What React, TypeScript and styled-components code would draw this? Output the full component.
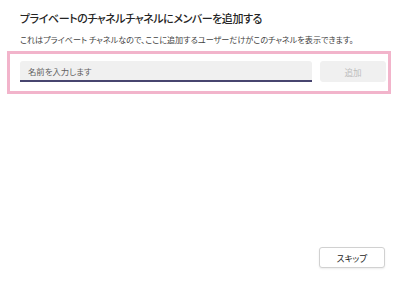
import styled, { createGlobalStyle } from 'styled-components';

const GlobalStyle = createGlobalStyle`
  html, body {
    margin: 0;
    padding: 0;
    background: #ffffff;
  }
  body {
    font-family: "Noto Sans CJK JP", "Noto Sans", sans-serif;
    font-feature-settings: "palt";
  }
`;

const Dialog = styled.div`
  display: flex;
  flex-direction: column;
  width: 400px;
  height: 281px;
  box-sizing: border-box;
  padding: 10px 0 13px;
`;

const Header = styled.div`
  padding: 0 20px;
`;

const Title = styled.h1`
  margin: 0;
  font-size: 11px;
  font-weight: 500;
  letter-spacing: -0.45px;
  line-height: 16px;
  color: #242424;
  white-space: nowrap;
`;

const Subtitle = styled.p`
  margin: 8px 0 0;
  font-size: 8.1px;
  line-height: 12px;
  color: #424242;
  white-space: nowrap;
`;

const Highlight = styled.div`
  display: flex;
  align-items: center;
  gap: 8px;
  margin: 5px 9px 0 7px;
  padding: 7px 2px 9px 10px;
  border: 3px solid #f2b4cb;
`;

const NameInput = styled.input`
  flex: 1;
  height: 21px;
  box-sizing: border-box;
  padding: 0 8px;
  border: none;
  border-bottom: 2px solid #47456f;
  border-radius: 3px 3px 0 0;
  background: #f0f0f0;
  font-family: inherit;
  font-feature-settings: "palt";
  font-size: 8.4px;
  color: #242424;
  outline: none;
  &::placeholder {
    color: #616161;
  }
`;

const Button = styled.button<{ $disabled?: boolean }>`
  width: 66px;
  height: 21px;
  box-sizing: border-box;
  border-radius: 3px;
  font-family: inherit;
  font-feature-settings: "palt";
  font-size: 8.6px;
  cursor: pointer;
  border: 1px solid ${(p) => (p.$disabled ? '#f0f0f0' : '#d1d1d1')};
  background: ${(p) => (p.$disabled ? '#f0f0f0' : '#ffffff')};
  color: ${(p) => (p.$disabled ? '#bdbdbd' : '#242424')};
  box-shadow: ${(p) => (p.$disabled ? 'none' : '0 1px 2px rgba(0,0,0,0.08)')};
`;

const Footer = styled.div`
  margin-top: auto;
  display: flex;
  justify-content: flex-end;
  padding: 0 15px;
`;

export default function App() {
  return (
    <>
      <GlobalStyle />
      <Dialog>
        <Header>
          <Title>プライベートのチャネルチャネルにメンバーを追加する</Title>
          <Subtitle>
            これはプライベート チャネルなので、ここに追加するユーザーだけがこのチャネルを表示できます。
          </Subtitle>
        </Header>
        <Highlight>
          <NameInput placeholder="名前を入力します" />
          <Button $disabled>追加</Button>
        </Highlight>
        <Footer>
          <Button>スキップ</Button>
        </Footer>
      </Dialog>
    </>
  );
}
